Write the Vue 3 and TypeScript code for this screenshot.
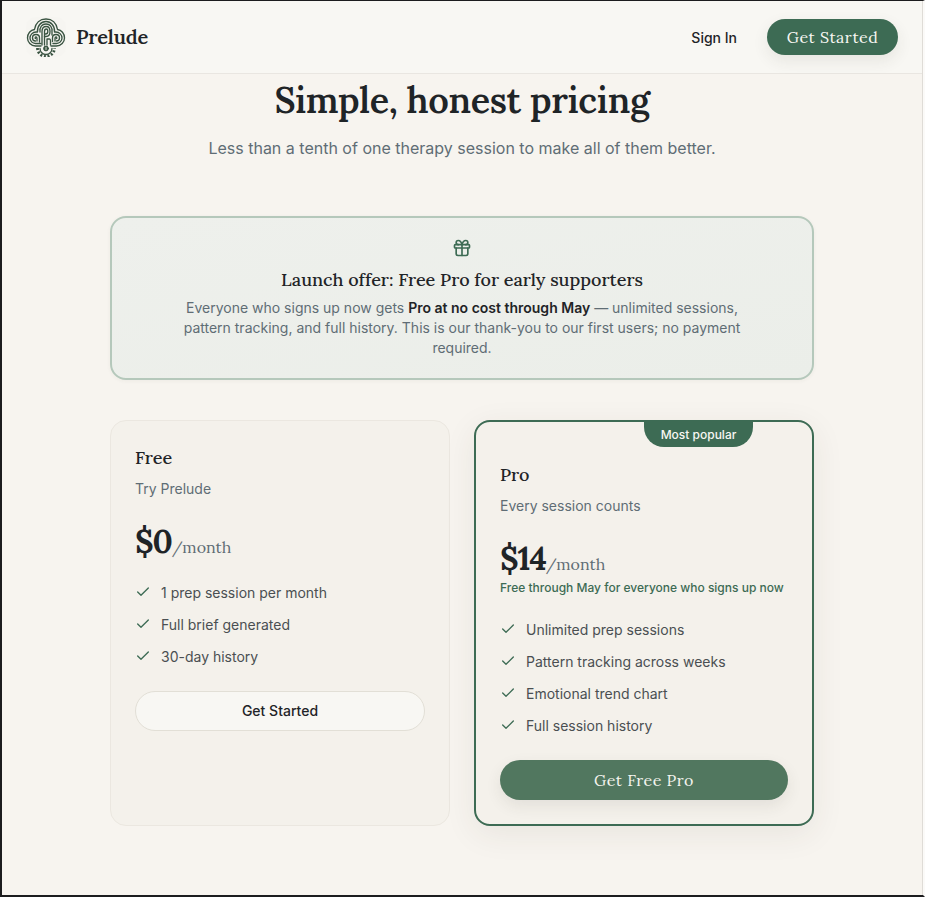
<script setup lang="ts">
const freeFeatures: string[] = ['1 prep session per month', 'Full brief generated', '30-day history']
const proFeatures: string[] = ['Unlimited prep sessions', 'Pattern tracking across weeks', 'Emotional trend chart', 'Full session history']
</script>

<template>
  <div class="frame">
    <div class="page">
      <header class="nav">
        <div class="brand">
          <span class="logo">
            <svg width="40" height="40" viewBox="0 0 40 40" fill="none" stroke="#3a5442" stroke-width="1.350" stroke-linecap="round" stroke-linejoin="round">
              <path d="M15 29H9.500C5 29 1.500 25 1.500 21C1.500 16.500 4.500 13 8.500 12.500C9.500 6 14 2 20 2C26 2 30.500 6 31.500 12.500C35.500 13 38.500 16.500 38.500 21C38.500 25 35 29 30.500 29H25" />
              <path d="M15 26.500H9.500C6.500 26.500 4 24 4 21C4 18 6.500 15 10 15H11.500C11 9 15 4.500 20 4.500C25 4.500 29 9 28.500 15H30C33.500 15 36 18 36 21C36 24 33.500 26.500 30.500 26.500H27" />
              <path d="M9.500 24C7.800 24 6.500 22.700 6.500 21C6.500 19 8 17.500 10 17.500C12 17.500 13.500 19 13.500 21V25" />
              <path d="M9.500 21.500C9 21.500 9 20 10 20C10.800 20 11 20.800 11 21.500V24" />
              <path d="M30.500 24C32.200 24 33.500 22.700 33.500 21C33.500 19 32 17.500 30 17.500C28 17.500 26.500 19 26.500 21V24.500" />
              <path d="M30.500 21.500C31 21.500 31 20 30 20C29.200 20 29 20.800 29 21.500V24" />
              <path d="M14 15C13.500 10 16 7 20 7C24 7 26.500 10 26 15V18" />
              <path d="M16 28V14.500C16 11.500 17.500 9.500 20.200 9.500C23 9.500 24 12 24 14.500C24 17.500 22.500 19.500 20 19.500H18.500" />
              <path d="M18.500 28V14.500C18.500 13 19.200 12 20.500 12C21.500 12 21.800 13 21.800 14.500C21.800 16 21 17 19.500 17" />
              <path d="M21 28V22H23.500C24.500 22 24.500 23 24.500 24V28" />
              <circle cx="20" cy="31.500" r="2.400" fill="#3a5442" stroke-width="1" />
              <path d="M20 30.500V32.500" stroke="#f0f0e8" stroke-width="0.900" />
              <path d="M14 31.500A6 6 0 0 0 26 31.500" />
              <path d="M11.500 31A8.500 8.500 0 0 0 28.500 31" stroke-width="2.800" stroke-dasharray="2 1.700" stroke-linecap="butt" />
            </svg>
          </span>
          <span class="brand-name">Prelude</span>
        </div>
        <div class="nav-actions">
          <span class="sign-in">Sign In</span>
          <span class="nav-cta">Get Started</span>
        </div>
      </header>

      <main class="content">
        <h1>Simple, honest pricing</h1>
        <p class="lead">Less than a tenth of one therapy session to make all of them better.</p>

        <section class="offer">
          <svg class="gift" width="20" height="20" viewBox="0 0 24 24" fill="none" stroke="#3d6b54" stroke-width="2" stroke-linecap="round" stroke-linejoin="round">
            <rect x="3" y="8" width="18" height="4" rx="1" />
            <path d="M12 8v13" />
            <path d="M19 12v7a2 2 0 0 1-2 2H7a2 2 0 0 1-2-2v-7" />
            <path d="M7.500 8a2.500 2.500 0 0 1 0-5A4.800 8 0 0 1 12 8a4.800 8 0 0 1 4.500-5 2.500 2.500 0 0 1 0 5" />
          </svg>
          <h2>Launch offer: Free Pro for early supporters</h2>
          <p>Everyone who signs up now gets <strong>Pro at no cost through May</strong> — unlimited sessions, pattern tracking, and full history. This is our thank-you to our first users; no payment required.</p>
        </section>

        <section class="plans">
          <article class="plan">
            <h3>Free</h3>
            <p class="tagline">Try Prelude</p>
            <div class="price"><span class="amount">$0</span><span class="period">/month</span></div>
            <ul>
              <li v-for="f in freeFeatures" :key="f">
                <svg width="16" height="16" viewBox="0 0 24 24" fill="none" stroke="#3d6b54" stroke-width="2" stroke-linecap="round" stroke-linejoin="round"><path d="M20 6 9 17l-5-5" /></svg>
                {{ f }}
              </li>
            </ul>
            <span class="btn-outline">Get Started</span>
          </article>

          <article class="plan pro">
            <span class="badge">Most popular</span>
            <h3>Pro</h3>
            <p class="tagline">Every session counts</p>
            <div class="price"><span class="amount">$14</span><span class="period">/month</span></div>
            <p class="note">Free through May for everyone who signs up now</p>
            <ul>
              <li v-for="f in proFeatures" :key="f">
                <svg width="16" height="16" viewBox="0 0 24 24" fill="none" stroke="#3d6b54" stroke-width="2" stroke-linecap="round" stroke-linejoin="round"><path d="M20 6 9 17l-5-5" /></svg>
                {{ f }}
              </li>
            </ul>
            <span class="btn-solid">Get Free Pro</span>
          </article>
        </section>
      </main>
    </div>
  </div>
</template>

<style>
html, body { margin: 0; background: #f7f4ef; }
</style>

<style scoped>
.frame {
  box-sizing: border-box;
  height: 897px;
  overflow: hidden;
  border-style: solid;
  border-color: #1c1c1e #fbfaf8 #1c1c1e #1c1c1e;
  border-width: 1px 2px 2px 2px;
  background: #f7f4ef;
  font-family: Inter, "Liberation Sans", sans-serif;
  color: #1f2427;
}
.page {
  height: 100%;
  border-right: 1px solid #dfdcd7;
}
.nav {
  height: 72px;
  border-bottom: 1px solid #e9e6e1;
  background: #f8f7f3;
  display: flex;
  align-items: center;
  justify-content: space-between;
  padding: 0 24px;
}
.brand { display: flex; align-items: center; gap: 10px; }
.logo {
  width: 40px;
  height: 40px;
  border-radius: 10px;
  background: #f6f5f1;
  display: flex;
}
.brand-name {
  font-family: Lora, "Liberation Serif", serif;
  font-weight: 600;
  font-size: 20px;
  letter-spacing: -0.2px;
  line-height: 24px;
  color: #1f2427;
}
.nav-actions { display: flex; align-items: center; gap: 30px; }
.sign-in { font-size: 14px; font-weight: 500; color: #1f2427; }
.nav-cta {
  font-family: Lora, "Liberation Serif", serif;
  height: 36px;
  line-height: 36px;
  width: 131px;
  text-align: center;
  border-radius: 18px;
  background: #3d6b54;
  color: #f8f7f3;
  font-size: 16px;
  letter-spacing: 0.5px;
  box-shadow: 0 6px 16px rgba(60, 50, 40, 0.09);
}
.content { width: 704px; margin: 0 auto; text-align: center; }
h1 {
  margin: 3px 0 0;
  font-family: Lora, "Liberation Serif", serif;
  font-weight: 600;
  font-size: 36px;
  letter-spacing: -0.36px;
  line-height: 47px;
  color: #1f2427;
}
.lead { margin: 12px 0 0; font-size: 16px; line-height: 24px; color: #5f6d75; }
.offer {
  box-sizing: border-box;
  margin-top: 56px;
  height: 164px;
  padding: 20px 64px 0;
  border: 2px solid #b5c8bb;
  border-radius: 16px;
  background: linear-gradient(170deg, #eef0ec, #ebeee9);
  box-shadow: 0 1px 4px rgba(60, 50, 40, 0.05);
}
.gift { display: block; margin: 0 auto; }
.offer h2 {
  margin: 10px 0 0;
  font-family: Lora, "Liberation Serif", serif;
  font-weight: 550;
  font-size: 18px;
  line-height: 24px;
  color: #1f2427;
}
.offer p { margin: 6px 0 0; font-size: 14px; line-height: 20px; color: #5f6d75; }
.offer strong { font-weight: 600; color: #1f2427; }
.plans { display: grid; grid-template-columns: 340px 340px; gap: 24px; margin-top: 40px; text-align: left; }
.plan {
  box-sizing: border-box;
  height: 406px;
  padding: 25px 24px 24px;
  border: 1px solid #ebe7e0;
  border-radius: 16px;
  background: #f4f1eb;
  position: relative;
}
.plan.pro {
  border: 2px solid #3d6b54;
  padding-top: 41px;
  box-shadow: 0 8px 32px rgba(60, 50, 40, 0.08);
}
h3 {
  margin: 0;
  font-family: Lora, "Liberation Serif", serif;
  font-weight: 550;
  font-size: 18px;
  line-height: 24px;
  color: #1f2427;
}
.tagline { margin: 9px 0 0; font-size: 14px; line-height: 20px; color: #5f6d75; }
.price { margin-top: 22px; display: flex; align-items: baseline; height: 42px; line-height: 42px; }
.amount { font-family: Lora, "Liberation Serif", serif; font-weight: 700; font-size: 32px; letter-spacing: -1.2px; color: #1f2427; }
.period { font-family: Lora, "Liberation Serif", serif; font-size: 16px; color: #5f6d75; }
.note { margin: -1px 0 0; font-size: 12px; font-weight: 500; line-height: 18px; color: #3d6b54; }
ul { list-style: none; margin: 13px 0 0; padding: 0; }
.pro ul { margin-top: 16px; }
li { display: flex; align-items: center; gap: 10px; height: 32px; font-size: 14px; color: #4a4f52; }
.btn-outline {
  display: block;
  box-sizing: border-box;
  margin-top: 19px;
  height: 40px;
  line-height: 38px;
  text-align: center;
  border: 1px solid #e2dfd6;
  border-radius: 20px;
  background: #f8f7f3;
  font-size: 14px;
  font-weight: 500;
  color: #1f2427;
}
.btn-solid {
  display: block;
  margin-top: 19px;
  height: 40px;
  line-height: 40px;
  text-align: center;
  border-radius: 20px;
  background: #51775f;
  color: #f4f4ee;
  font-family: Lora, "Liberation Serif", serif;
  font-size: 16px;
  letter-spacing: 0.5px;
  box-shadow: 0 6px 16px rgba(60, 50, 40, 0.09);
}
.badge {
  position: absolute;
  top: 0;
  right: 59px;
  width: 109px;
  height: 25px;
  line-height: 26px;
  text-align: center;
  background: #3d6b54;
  color: #f8f7f3;
  font-size: 12px;
  font-weight: 500;
  border-radius: 0 0 20px 20px;
}
</style>
